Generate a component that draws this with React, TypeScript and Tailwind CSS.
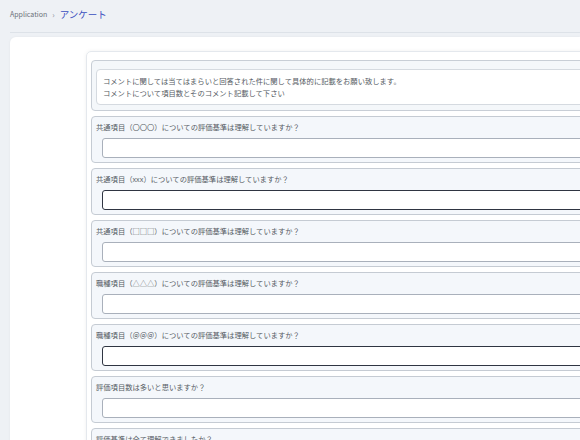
import React from 'react';

interface Question {
  label: string;
  dark?: boolean;
}

const questions: Question[] = [
  { label: '共通項目（〇〇〇）についての評価基準は理解していますか？' },
  { label: '共通項目（xxx）についての評価基準は理解していますか？', dark: true },
  { label: '共通項目（□□□）についての評価基準は理解していますか？' },
  { label: '職種項目（△△△）についての評価基準は理解していますか？' },
  { label: '職種項目（＠＠＠）についての評価基準は理解していますか？', dark: true },
  { label: '評価項目数は多いと思いますか？' },
  { label: '評価基準は全て理解できましたか？' },
];

function QuestionRow({ label, dark }: Question) {
  return (
    <div className="h-[47px] shrink-0 rounded-[4px] border border-[#c5cbd3] bg-[#f4f7fb] pl-[4px]">
      <div className="pt-[6px] text-[7.3px] leading-[8px] text-[#555b63]">{label}</div>
      <div
        className={
          dark
            ? 'mt-[7px] ml-[6px] h-[20px] rounded-[3px] border border-[#2f3542] bg-white'
            : 'mt-[7px] ml-[6px] h-[20px] rounded-[3px] border border-[#a9b0bb] bg-white'
        }
      />
    </div>
  );
}

export default function App() {
  return (
    <div
      className="h-[440px] w-[580px] overflow-hidden bg-[#eef1f5]"
      style={{ fontFamily: '"Noto Sans CJK JP", "Noto Sans", sans-serif' }}
    >
      {/* breadcrumb */}
      <div className="ml-[10px] flex h-[33px] items-center gap-[5px] border-b border-[#dde2e8] pb-[3px]">
        <span className="text-[7px] text-[#6b7078]">Application</span>
        <span className="text-[8px] text-[#8a9099]">›</span>
        <span className="text-[9.5px] text-[#3a4fbf]">アンケート</span>
      </div>

      {/* card */}
      <div className="ml-[10px] mt-[4px] h-[420px] rounded-tl-[6px] bg-white pl-[76px] pt-[14px] shadow-[0_0_3px_rgba(0,0,0,0.05)]">
        <div className="flex w-[520px] flex-col gap-[5px] rounded-[5px] border border-[#e4e8ed] px-[4px] pt-[8px] shadow-[0_0_4px_rgba(0,0,0,0.06)]">
          {/* intro */}
          <div className="h-[51px] shrink-0 rounded-[4px] border border-[#c8ced6] bg-[#f4f7fa] pl-[4px] pt-[8px]">
            <div className="flex h-[36px] flex-col justify-center rounded-[4px] border border-[#d5dae0] bg-white pl-[6px] text-[7.3px] leading-[12px] text-[#555b63]">
              <div>コメントに関しては当てはまらいと回答された件に関して具体的に記載をお願い致します。</div>
              <div>コメントについて項目数とそのコメント記載して下さい</div>
            </div>
          </div>

          {questions.map((q) => (
            <QuestionRow key={q.label} {...q} />
          ))}
        </div>
      </div>
    </div>
  );
}
